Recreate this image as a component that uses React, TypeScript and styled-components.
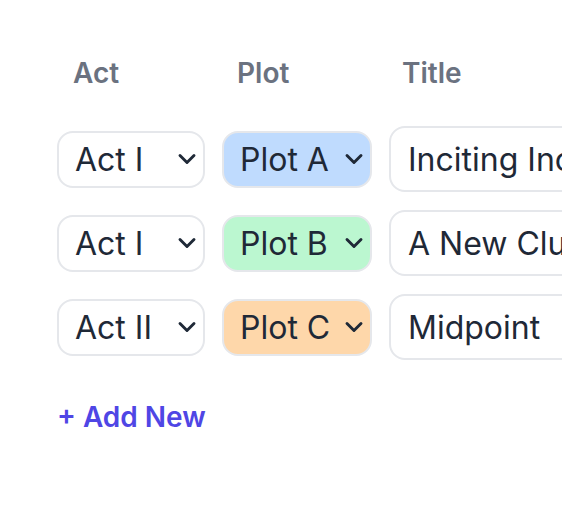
import React from 'react';
import styled, { createGlobalStyle } from 'styled-components';
import { ChevronDown } from 'lucide-react';

const GlobalStyle = createGlobalStyle`
  html, body {
    margin: 0;
    padding: 0;
    background: #ffffff;
    overflow: hidden;
  }
  body {
    font-family: Inter, "Liberation Sans", sans-serif;
    color: #1f2937;
  }
`;

const Page = styled.div`
  box-sizing: border-box;
  width: 100%;
  padding: 53px 0 0 57px;
  overflow: hidden;
`;

const Grid = styled.div`
  display: grid;
  grid-template-columns: 148px 150px 320px;
  column-gap: 17px;
  row-gap: 18px;
  align-items: center;
`;

const HeadCell = styled.div<{ $pad: number }>`
  font-size: 28px;
  line-height: 40px;
  font-weight: 600;
  color: #6b7280;
  padding-left: ${(p) => p.$pad}px;
  margin-bottom: 15px;
`;

const SelectBox = styled.div<{ $bg: string }>`
  display: flex;
  align-items: center;
  justify-content: space-between;
  box-sizing: border-box;
  height: 57px;
  padding: 0 2px 0 16px;
  border: 2px solid #e5e7eb;
  border-radius: 16px;
  background: ${(p) => p.$bg};
  font-size: 32px;
  color: #1f2937;
  cursor: pointer;
`;

const TitleInput = styled.input`
  box-sizing: border-box;
  width: 100%;
  height: 66px;
  padding: 0 17px;
  border: 2px solid #e5e7eb;
  border-radius: 16px;
  background: #ffffff;
  font-family: Inter, "Liberation Sans", sans-serif;
  font-size: 32px;
  color: #1f2937;
  outline: none;
`;

const AddButton = styled.button`
  margin-top: 37px;
  padding: 0;
  border: none;
  background: none;
  font-family: Inter, "Liberation Sans", sans-serif;
  font-size: 28px;
  line-height: 40px;
  font-weight: 600;
  color: #4f46e5;
  cursor: pointer;
`;

const rows = [
  { act: 'Act I', plot: 'Plot A', color: '#bfdbfe', title: 'Inciting Incident' },
  { act: 'Act I', plot: 'Plot B', color: '#bbf7d0', title: 'A New Clue' },
  { act: 'Act II', plot: 'Plot C', color: '#fed7aa', title: 'Midpoint' },
];

const Select = ({ label, bg }: { label: string; bg: string }) => (
  <SelectBox $bg={bg}>
    <span>{label}</span>
    <ChevronDown size={28} strokeWidth={2.5} color="#1f2937" />
  </SelectBox>
);

export default function App() {
  return (
    <Page>
      <GlobalStyle />
      <Grid>
        <HeadCell $pad={16}>Act</HeadCell>
        <HeadCell $pad={15}>Plot</HeadCell>
        <HeadCell $pad={13}>Title</HeadCell>
        {rows.map((r, i) => (
          <React.Fragment key={i}>
            <Select label={r.act} bg="#ffffff" />
            <Select label={r.plot} bg={r.color} />
            <TitleInput defaultValue={r.title} />
          </React.Fragment>
        ))}
      </Grid>
      <AddButton type="button">+ Add New</AddButton>
    </Page>
  );
}
